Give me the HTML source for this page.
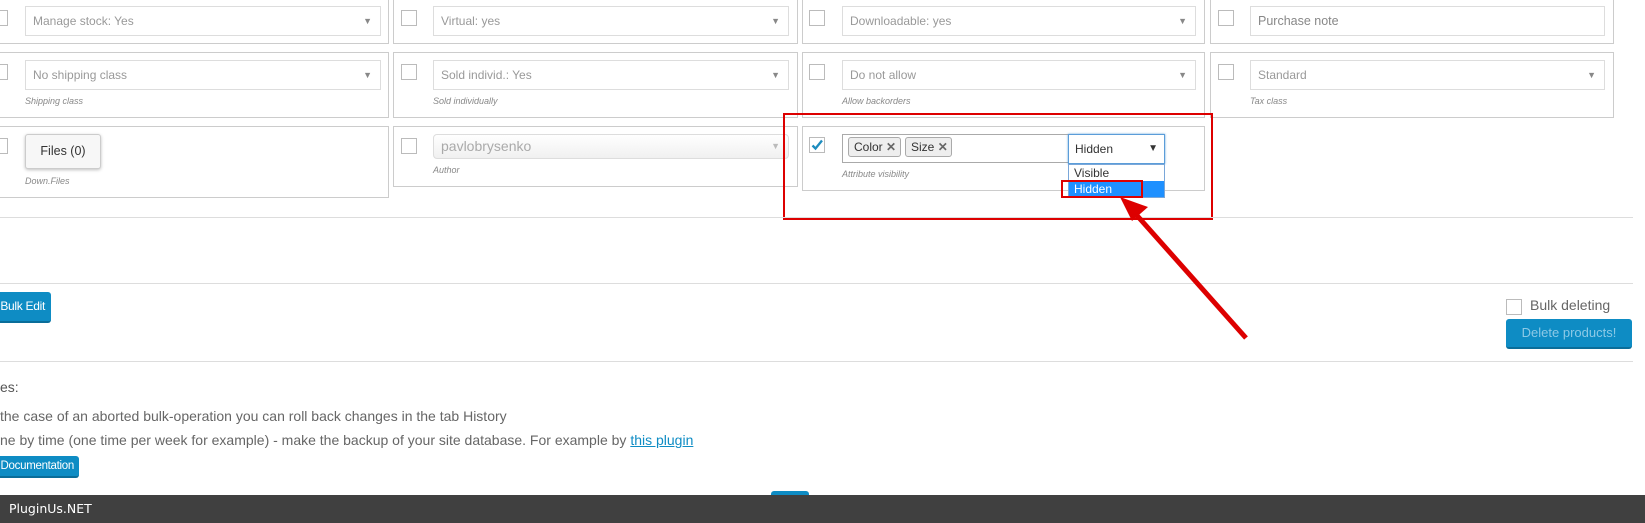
<!DOCTYPE html>
<html><head><meta charset="utf-8"><style>
*{box-sizing:border-box;margin:0;padding:0}
body{width:1645px;height:523px;overflow:hidden;background:#fff;font-family:"Liberation Sans",sans-serif;position:relative;color:#555}
.a{position:absolute}
.box{position:absolute;border:1px solid #ccc;background:#fff}
.cb{position:absolute;width:16px;height:16px;border:1px solid #bbb;background:#fff}
.sel{position:absolute;border:1px solid #ddd;height:30px;font-size:12px;color:#999;line-height:28px;padding-left:7px;background:#fff}
.sel .ar{position:absolute;right:8px;top:0;font-size:9px;color:#888}
.lbl{position:absolute;font-size:9px;font-style:italic;color:#888}
.line{position:absolute;left:0;width:1633px;height:1px;background:#ddd}
.btn{position:absolute;background:#0e8cc4;color:#fff;border-radius:3px;border-bottom:2px solid #0a6d99;font-size:13.5px;text-align:center;white-space:nowrap;overflow:hidden}
</style></head><body>
<!-- row 1 -->
<div class="box" style="left:-2px;top:-5px;width:391px;height:49px"></div>
<div class="cb" style="left:-8px;top:10px"></div>
<div class="sel" style="left:25px;top:6px;width:356px">Manage stock: Yes<span class="ar">▼</span></div>
<div class="box" style="left:393px;top:-5px;width:405px;height:49px"></div>
<div class="cb" style="left:401px;top:10px"></div>
<div class="sel" style="left:433px;top:6px;width:356px">Virtual: yes<span class="ar">▼</span></div>
<div class="box" style="left:802px;top:-5px;width:403px;height:49px"></div>
<div class="cb" style="left:809px;top:10px"></div>
<div class="sel" style="left:842px;top:6px;width:354px">Downloadable: yes<span class="ar">▼</span></div>
<div class="box" style="left:1210px;top:-5px;width:404px;height:49px"></div>
<div class="cb" style="left:1218px;top:10px"></div>
<div class="sel" style="left:1250px;top:6px;width:355px;color:#888;font-size:12.5px">Purchase note</div>
<!-- row 2 -->
<div class="box" style="left:-2px;top:52px;width:391px;height:66px"></div>
<div class="cb" style="left:-8px;top:64px"></div>
<div class="sel" style="left:25px;top:60px;width:356px">No shipping class<span class="ar">▼</span></div>
<div class="lbl" style="left:25px;top:96px">Shipping class</div>
<div class="box" style="left:393px;top:52px;width:405px;height:66px"></div>
<div class="cb" style="left:401px;top:64px"></div>
<div class="sel" style="left:433px;top:60px;width:356px">Sold individ.: Yes<span class="ar">▼</span></div>
<div class="lbl" style="left:433px;top:96px">Sold individually</div>
<div class="box" style="left:802px;top:52px;width:403px;height:66px"></div>
<div class="cb" style="left:809px;top:64px"></div>
<div class="sel" style="left:842px;top:60px;width:354px">Do not allow<span class="ar">▼</span></div>
<div class="lbl" style="left:842px;top:96px">Allow backorders</div>
<div class="box" style="left:1210px;top:52px;width:404px;height:66px"></div>
<div class="cb" style="left:1218px;top:64px"></div>
<div class="sel" style="left:1250px;top:60px;width:355px">Standard<span class="ar">▼</span></div>
<div class="lbl" style="left:1250px;top:96px">Tax class</div>
<!-- row 3 -->
<div class="box" style="left:-2px;top:126px;width:391px;height:72px"></div>
<div class="cb" style="left:-8px;top:138px"></div>
<div class="a" style="left:25px;top:134px;width:76px;height:35px;border:1px solid #ccc;border-radius:3px;background:#f7f7f7;box-shadow:0 1px 3px rgba(0,0,0,.25);font-size:12.5px;color:#333;text-align:center;line-height:33px">Files (0)</div>
<div class="lbl" style="left:25px;top:176px">Down.Files</div>
<div class="box" style="left:393px;top:126px;width:405px;height:61px"></div>
<div class="cb" style="left:401px;top:138px"></div>
<div class="sel" style="left:433px;top:134px;width:356px;height:25px;line-height:23px;border-radius:4px;font-size:14px;color:#aaa;background:linear-gradient(#fff,#f0f0f0)">pavlobrysenko<span class="ar" style="color:#bbb">▼</span></div>
<div class="lbl" style="left:433px;top:165px">Author</div>
<div class="box" style="left:802px;top:126px;width:403px;height:65px"></div>
<div class="cb" style="left:809px;top:137px"><svg width="14" height="14" style="position:absolute;left:0;top:0"><path d="M2.5 7.5 L5.5 10.5 L12 2.5" fill="none" stroke="#1e8cbe" stroke-width="2.3"/></svg></div>
<div class="a" style="left:842px;top:134px;width:230px;height:29px;border:1px solid #aaa;background:#fff"></div>
<div class="a" style="left:848px;top:137px;width:53px;height:20px;border:1px solid #aaa;border-radius:3px;background:#eee;font-size:12px;color:#333;line-height:18px;padding-left:5px">Color <b style="color:#666">✕</b></div>
<div class="a" style="left:905px;top:137px;width:47px;height:20px;border:1px solid #aaa;border-radius:3px;background:#eee;font-size:12px;color:#333;line-height:18px;padding-left:5px">Size <b style="color:#666">✕</b></div>
<div class="a" style="left:1068px;top:134px;width:97px;height:30px;border:1px solid #5b9dd9;box-shadow:0 0 2px #5b9dd9;background:#fff;font-size:12px;color:#333;line-height:28px;padding-left:6px">Hidden<span style="position:absolute;right:6px;font-size:10px">▼</span></div>
<div class="a" style="left:1068px;top:164px;width:97px;height:34px;border:1px solid #7aa7d9;background:#fff;font-size:12px;color:#333"><div style="height:16px;line-height:16px;padding-left:5px">Visible</div><div style="height:16px;line-height:16px;padding-left:5px;background:#1e90ff;color:#fff">Hidden</div></div>
<div class="a" style="left:1061px;top:180px;width:82px;height:18px;border:2px solid #d00"></div>
<div class="lbl" style="left:842px;top:169px">Attribute visibility</div>
<div class="a" style="left:783px;top:113px;width:430px;height:107px;border:2px solid #d00"></div>
<!-- lines -->
<div class="line" style="top:217px"></div>
<div class="line" style="top:283px"></div>
<div class="line" style="top:361px"></div>
<svg class="a" style="left:0;top:0" width="1645" height="523"><line x1="1246" y1="338" x2="1133" y2="211" stroke="#d00" stroke-width="5"/><polygon points="1120,197 1148,207 1132,221" fill="#d00"/></svg>
<div class="btn" style="left:-14px;top:292px;width:65px;height:31px;line-height:29px;text-align:right;padding-right:6px;font-size:12px;letter-spacing:-0.3px">Bulk Edit</div>
<div class="cb" style="left:1506px;top:299px"></div>
<div class="a" style="left:1530px;top:297px;font-size:14px;color:#666">Bulk deleting</div>
<div class="btn" style="left:1506px;top:319px;width:126px;height:30px;line-height:28px;color:#8cc9e6;font-size:13px">Delete products!</div>
<div class="a" style="left:0;top:379px;font-size:14px;color:#555">es:</div>
<div class="a" style="left:0;top:408px;font-size:14px;color:#666">the case of an aborted bulk-operation you can roll back changes in the tab History</div>
<div class="a" style="left:0;top:432px;font-size:14px;color:#666;white-space:nowrap">ne by time (one time per week for example) - make the backup of your site database. For example by <span style="color:#0e8cc4;text-decoration:underline">this plugin</span></div>
<div class="btn" style="left:-10px;top:456px;width:89px;height:22px;line-height:20px;text-align:right;padding-right:5px;font-size:11.5px;letter-spacing:-0.3px">Documentation</div>
<div class="a" style="left:771px;top:491px;width:38px;height:6px;background:#0e8cc4;border-radius:3px 3px 0 0"></div>
<div class="a" style="left:0;top:495px;width:1645px;height:28px;background:#404040;color:#fff;line-height:28px;padding-left:9px;font-family:'DejaVu Sans',sans-serif;font-size:12.5px">PluginUs.NET</div>
</body></html>
